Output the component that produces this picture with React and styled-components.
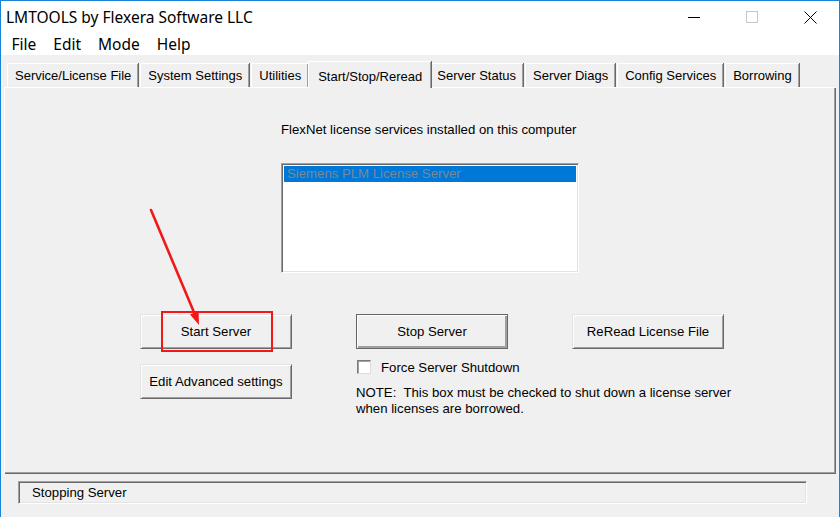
import styled, { createGlobalStyle } from "styled-components";

const GlobalStyle = createGlobalStyle`
  html, body {
    margin: 0;
    padding: 0;
    overflow: hidden;
    background: #f0f0f0;
  }
  * { box-sizing: border-box; }
`;

const Window = styled.div`
  position: relative;
  width: 840px;
  height: 517px;
  border: 1px solid #1883d7;
  border-bottom: none;
  background: #f0f0f0;
  display: flex;
  flex-direction: column;
  font-family: "Liberation Sans", Arial, sans-serif;
  color: #000;
`;

const TitleBar = styled.div`
  height: 32px;
  background: #fff;
  display: flex;
  align-items: center;
  padding-left: 5px;
`;

const Title = styled.div`
  flex: 1;
  font-family: "Noto Sans", "Open Sans", sans-serif;
  font-size: 15.5px;
  color: #000;
  padding-bottom: 1px;
`;

const Control = styled.div`
  width: 58px;
  height: 32px;
  display: flex;
  align-items: center;
  justify-content: center;
`;

const MenuBar = styled.div`
  height: 22px;
  background: #fff;
  display: flex;
  align-items: center;
  padding-left: 2px;
  font-family: "Noto Sans", "Open Sans", sans-serif;
  font-size: 15.5px;
`;

const MenuItem = styled.span`
  padding: 0 8.5px;
  margin-top: -1px;
`;

const Body = styled.div`
  flex: 1;
  display: flex;
  flex-direction: column;
  padding: 6px 2px 0 3px;
`;

const TabStrip = styled.div`
  display: flex;
  align-items: flex-end;
  height: 26px;
  padding-left: 3px;
  position: relative;
  z-index: 1;
`;

const Tab = styled.div`
  height: ${(p) => (p.$active ? "27px" : "24px")};
  margin: ${(p) => (p.$active ? "0 -2px -1px -2px" : "0 2px 0 0")};
  padding: ${(p) => (p.$active ? "2px 9px 0 9px" : "0 7px")};
  display: flex;
  align-items: center;
  font-size: 13px;
  background: #f0f0f0;
  border-top: 1px solid #fff;
  border-left: 1px solid #fff;
  box-shadow: inset -1px 0 0 #a0a0a0, 1px 0 0 #696969;
  white-space: nowrap;
  position: relative;
  z-index: ${(p) => (p.$active ? 2 : 1)};
  &:last-child { margin-right: 0; }
`;

const Panel = styled.div`
  height: 386px;
  border-top: 1px solid #fff;
  border-left: 1px solid #fff;
  box-shadow: inset -1px -1px 0 #a0a0a0, 1px 1px 0 #696969;
  margin-right: 2px;
  display: flex;
  flex-direction: column;
`;

const ServicesBlock = styled.div`
  margin-left: 276px;
  display: flex;
  flex-direction: column;
`;

const Label = styled.div`
  font-size: 13.2px;
  line-height: 16px;
  margin-top: 34px;
`;

const ListBox = styled.div`
  width: 298px;
  height: 110px;
  margin-top: 25px;
  background: #fff;
  border-top: 1px solid #a0a0a0;
  border-left: 1px solid #a0a0a0;
  border-bottom: 1px solid #fff;
  border-right: 1px solid #fff;
  box-shadow: inset 1px 1px 0 #696969, inset -1px -1px 0 #e3e3e3;
  padding: 2px;
`;

const ListItem = styled.div`
  height: 16px;
  line-height: 16px;
  padding-left: 3px;
  font-size: 13.2px;
  background: ${(p) => (p.$selected ? "#0078d7" : "transparent")};
  color: ${(p) => (p.$selected ? "#7b8896" : "#000")};
`;

const Actions = styled.div`
  margin: 41px 0 0 135px;
  display: grid;
  grid-template-columns: 152px 152px 152px;
  column-gap: 64px;
  row-gap: 10px;
  align-items: start;
`;

const Button = styled.div`
  width: 152px;
  height: 35px;
  margin-top: ${(p) => p.$offset || 0}px;
  display: flex;
  align-items: center;
  justify-content: center;
  font-size: 13.2px;
  background: #f0f0f0;
  border-top: 1px solid ${(p) => (p.$default ? "#646464" : "#e3e3e3")};
  border-left: 1px solid ${(p) => (p.$default ? "#646464" : "#e3e3e3")};
  border-right: 1px solid #696969;
  border-bottom: 1px solid #696969;
  box-shadow: inset 1px 1px 0 #fff, inset -1px -1px 0 #a0a0a0
    ${(p) => (p.$default ? ", inset -2px -2px 0 #a0a0a0" : "")};
`;

const Options = styled.div`
  grid-column: 2 / span 2;
  display: flex;
  flex-direction: column;
`;

const CheckRow = styled.label`
  display: flex;
  align-items: center;
  gap: 10px;
  font-size: 13.2px;
  height: 16px;
  padding-left: 1px;
`;

const CheckBox = styled.span`
  width: 14px;
  height: 14px;
  background: #fff;
  border-top: 1px solid #7a7a7a;
  border-left: 1px solid #7a7a7a;
  border-right: 1px solid #dcdcdc;
  border-bottom: 1px solid #dcdcdc;
  box-shadow: inset 1px 1px 0 #a0a0a0;
`;

const Note = styled.p`
  margin: 10px 0 0 0;
  font-size: 13.2px;
  line-height: 16px;
  white-space: nowrap;
`;

const StatusArea = styled.div`
  padding: 8px 0 0 14px;
`;

const StatusField = styled.div`
  width: 789px;
  height: 23px;
  display: flex;
  align-items: center;
  padding-left: 13px;
  font-size: 13.2px;
  border-top: 1px solid #a0a0a0;
  border-left: 1px solid #a0a0a0;
  border-right: 1px solid #fff;
  border-bottom: 1px solid #fff;
  box-shadow: inset 1px 1px 0 #696969, inset -1px -1px 0 #e3e3e3;
`;

const Annotation = styled.svg`
  position: absolute;
  left: -1px;
  top: -1px;
  pointer-events: none;
`;

const tabs = [
  "Service/License File",
  "System Settings",
  "Utilities",
  "Start/Stop/Reread",
  "Server Status",
  "Server Diags",
  "Config Services",
  "Borrowing",
];

export default function App() {
  return (
    <>
      <GlobalStyle />
      <Window>
        <TitleBar>
          <Title>LMTOOLS by Flexera Software LLC</Title>
          <Control>
            <svg width="12" height="12" viewBox="0 0 12 12">
              <line x1="0" y1="6.5" x2="12" y2="6.5" stroke="#000" strokeWidth="1" />
            </svg>
          </Control>
          <Control>
            <svg width="12" height="12" viewBox="0 0 12 12">
              <rect x="0.5" y="0.5" width="11" height="11" fill="none" stroke="#c8c8c8" strokeWidth="1" />
            </svg>
          </Control>
          <Control>
            <svg width="13" height="13" viewBox="0 0 13 13">
              <path d="M0.5 0.5 L12.5 12.5 M12.5 0.5 L0.5 12.5" stroke="#000" strokeWidth="1" />
            </svg>
          </Control>
        </TitleBar>
        <MenuBar>
          <MenuItem>File</MenuItem>
          <MenuItem>Edit</MenuItem>
          <MenuItem>Mode</MenuItem>
          <MenuItem>Help</MenuItem>
        </MenuBar>
        <Body>
          <TabStrip>
            {tabs.map((t) => (
              <Tab key={t} $active={t === "Start/Stop/Reread"}>
                {t}
              </Tab>
            ))}
          </TabStrip>
          <Panel>
            <ServicesBlock>
              <Label>FlexNet license services installed on this computer</Label>
              <ListBox>
                <ListItem $selected>Siemens PLM License Server</ListItem>
              </ListBox>
            </ServicesBlock>
            <Actions>
              <Button>Start Server</Button>
              <Button $default>Stop Server</Button>
              <Button>ReRead License File</Button>
              <Button $offset={5}>Edit Advanced settings</Button>
              <Options>
                <CheckRow>
                  <CheckBox />
                  Force Server Shutdown
                </CheckRow>
                <Note>
                  NOTE:&nbsp; This box must be checked to shut down a license server
                  <br />
                  when licenses are borrowed.
                </Note>
              </Options>
            </Actions>
          </Panel>
          <StatusArea>
            <StatusField>Stopping Server</StatusField>
          </StatusArea>
        </Body>
        <Annotation width="840" height="517" viewBox="0 0 840 517">
          <line x1="151" y1="210" x2="194.5" y2="313.5" stroke="#f21818" strokeWidth="2.6" strokeLinecap="round" />
          <polygon points="199,325 190,314.5 198.6,311" fill="#f21818" />
          <rect x="162" y="312" width="110" height="39" fill="none" stroke="#f21818" strokeWidth="2" />
        </Annotation>
      </Window>
    </>
  );
}
